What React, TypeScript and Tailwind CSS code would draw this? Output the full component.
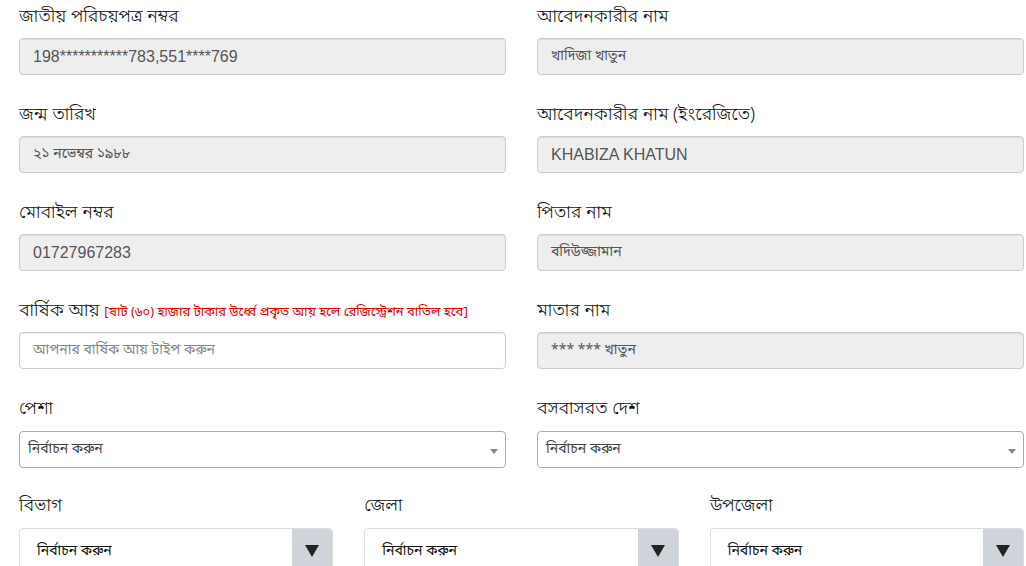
import React from 'react';

const bn = "font-['Noto_Sans_Bengali','Lohit_Bengali','Noto_Sans','Liberation_Sans',sans-serif]";
const labelCls = `h-[26px] text-[18px] leading-[28px] font-light text-[#111] whitespace-nowrap ${bn}`;

// Label + read-only/gray input
const Field: React.FC<{ label: React.ReactNode; value?: string; placeholder?: string; disabled?: boolean; latin?: boolean }> = ({
  label,
  value,
  placeholder,
  disabled = true,
  latin = false,
}) => (
  <div className="flex flex-col">
    <label className={labelCls}>{label}</label>
    <div
      className={`mt-[9px] h-[37px] flex items-center px-[13px] rounded-[4px] border border-[#ccc] shadow-[inset_0_1px_1px_rgba(0,0,0,0.075)] ${
        disabled ? 'bg-[#eeeeee]' : 'bg-white'
      }`}
    >
      {value ? (
        <span
          className={`text-[#555] ${
            latin ? "font-['Liberation_Sans',Arial,sans-serif] text-[16px]" : `${bn} text-[14px]`
          }`}
        >
          {value}
        </span>
      ) : (
        <span className={`text-[#888] text-[14px] ${bn}`}>{placeholder}</span>
      )}
    </div>
  </div>
);

// Select2-style dropdown with small caret
const Select2: React.FC<{ label: string }> = ({ label }) => (
  <div className="flex flex-col">
    <label className={labelCls}>{label}</label>
    <div className="mt-[10px] h-[37px] flex items-center justify-between pl-[8px] pr-[7px] rounded-[4px] border border-[#aaa] bg-white">
      <span className={`text-[14px] text-[#444] ${bn}`}>নির্বাচন করুন</span>
      <span className="w-0 h-0 border-l-[4px] border-r-[4px] border-t-[5px] border-l-transparent border-r-transparent border-t-[#888] mt-[3px]" />
    </div>
  </div>
);

// Native-style select with gray arrow block
const BlockSelect: React.FC<{ label: string }> = ({ label }) => (
  <div className="flex flex-col">
    <label className={labelCls}>{label}</label>
    <div className="mt-[10px] h-[46px] flex items-stretch rounded-[4px] border border-[#dcdcdc] bg-white overflow-hidden">
      <div className="flex-1 flex items-center pl-[17px]">
        <span className={`text-[14px] text-[#111] ${bn}`}>নির্বাচন করুন</span>
      </div>
      <div className="w-[40px] bg-[#cfd4da] flex items-center justify-center">
        <span className="w-0 h-0 border-l-[7px] border-r-[7px] border-t-[12px] border-l-transparent border-r-transparent border-t-[#222]" />
      </div>
    </div>
  </div>
);

export default function App() {
  return (
    <div className="w-[1026px] h-[566px] overflow-hidden bg-white pl-[19px] pr-[2px] pt-[3px]">
      <div className="grid grid-cols-2 gap-x-[31px] gap-y-[26px]">
        <Field label="জাতীয় পরিচয়পত্র নম্বর" value="198***********783,551****769" latin />
        <Field label="আবেদনকারীর নাম" value="খাদিজা খাতুন" />
        <Field label="জন্ম তারিখ" value="২১ নভেম্বর ১৯৮৮" />
        <Field label="আবেদনকারীর নাম (ইংরেজিতে)" value="KHABIZA KHATUN" latin />
        <Field label="মোবাইল নম্বর" value="01727967283" latin />
        <Field label="পিতার নাম" value="বদিউজ্জামান" />
        <Field
          label={
            <>
              বার্ষিক আয়{' '}
              <span className="text-[13px] font-normal text-[#e00000]">[ষাট (৬০) হাজার টাকার উর্ধ্বে প্রকৃত আয় হলে রেজিস্ট্রেশন বাতিল হবে]</span>
            </>
          }
          placeholder="আপনার বার্ষিক আয় টাইপ করুন"
          disabled={false}
        />
        <Field label="মাতার নাম" value="*** *** খাতুন" />
        <Select2 label="পেশা" />
        <Select2 label="বসবাসরত দেশ" />
      </div>
      <div className="grid grid-cols-3 gap-x-[31px] mt-[24px]">
        <BlockSelect label="বিভাগ" />
        <BlockSelect label="জেলা" />
        <BlockSelect label="উপজেলা" />
      </div>
    </div>
  );
}
